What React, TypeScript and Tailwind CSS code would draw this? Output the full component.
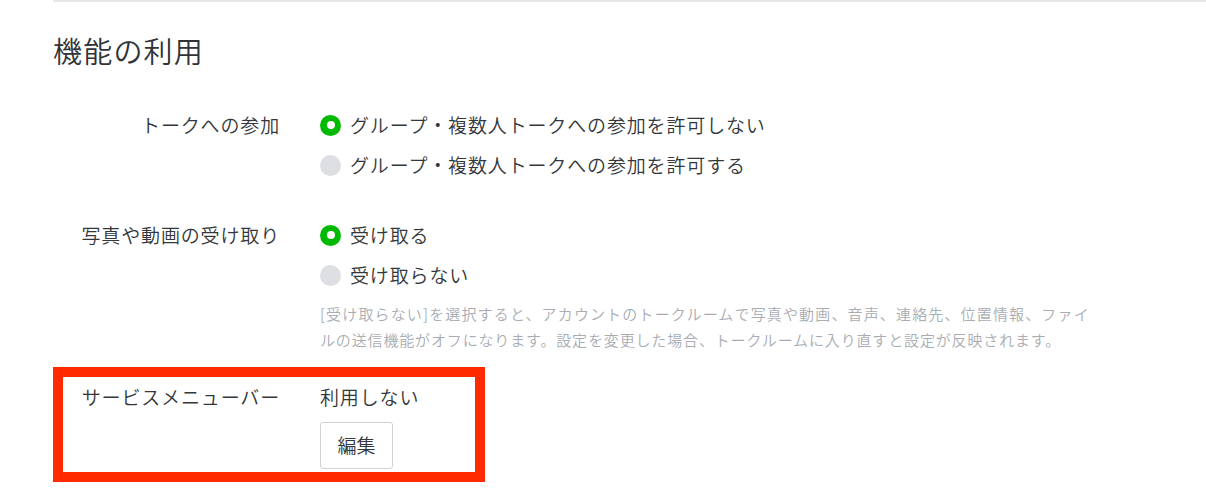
const font = { fontFamily: '"Noto Sans CJK JP", "Noto Sans", sans-serif' };

function Radio({ checked, label }: { checked: boolean; label: string }) {
  return (
    <div className="flex items-center h-[40px]">
      {checked ? (
        <span className="w-[21px] h-[21px] rounded-full bg-[#00b900] flex items-center justify-center">
          <span className="w-[8px] h-[8px] rounded-full bg-white" />
        </span>
      ) : (
        <span className="w-[21px] h-[21px] rounded-full bg-[#dddfe3]" />
      )}
      <span className="ml-[9px] text-[19px] font-[350] tracking-[0.85px] text-[#33373b]">{label}</span>
    </div>
  );
}

function Row({ label, children }: { label: string; children: React.ReactNode }) {
  return (
    <div className="grid grid-cols-[227px_1fr] gap-x-[40px]">
      <div className="text-right text-[19px] font-[350] tracking-[0.85px] leading-[40px] text-[#33373b]">{label}</div>
      <div>{children}</div>
    </div>
  );
}

export default function App() {
  return (
    <div className="w-[1206px] h-[492px] bg-white overflow-hidden" style={font}>
      <div className="ml-[53px] h-[2px] bg-[#e6e6e6]" />
      <div className="pl-[53px]">
        {/* Heading */}
        <h2 className="mt-[30px] text-[29px] font-[350] leading-[36px] tracking-[1.2px] text-[#2f3338]">機能の利用</h2>

        {/* トークへの参加 */}
        <div className="mt-[37px]">
          <Row label="トークへの参加">
            <Radio checked label="グループ・複数人トークへの参加を許可しない" />
            <Radio checked={false} label="グループ・複数人トークへの参加を許可する" />
          </Row>
        </div>

        {/* 写真や動画の受け取り */}
        <div className="mt-[30px]">
          <Row label="写真や動画の受け取り">
            <Radio checked label="受け取る" />
            <Radio checked={false} label="受け取らない" />
            <p className="mt-[6px] text-[15px] font-[350] leading-[26px] text-[#a9adb3] whitespace-nowrap">
              <span className="block tracking-[1.15px]">
                [受け取らない]を選択すると、アカウントのトークルームで写真や動画、音声、連絡先、位置情報、ファイ
              </span>
              <span className="block tracking-[0.85px]">
                ルの送信機能がオフになります。設定を変更した場合、トークルームに入り直すと設定が反映されます。
              </span>
            </p>
          </Row>
        </div>

        {/* サービスメニューバー */}
        <div className="relative mt-[24px]">
          <Row label="サービスメニューバー">
            <div className="h-[40px] flex items-center text-[19px] font-[350] tracking-[0.85px] text-[#33373b]">利用しない</div>
            <button className="mt-[5px] w-[73px] h-[47px] flex items-center justify-center border border-[#cfd3d8] rounded-[3px] bg-white text-[19px] font-[350] text-[#33373b]">
              編集
            </button>
          </Row>
          <div className="absolute left-0 -top-[10px] w-[432px] h-[115px] border-[10px] border-[#ff2a00] pointer-events-none" />
        </div>
      </div>
    </div>
  );
}
